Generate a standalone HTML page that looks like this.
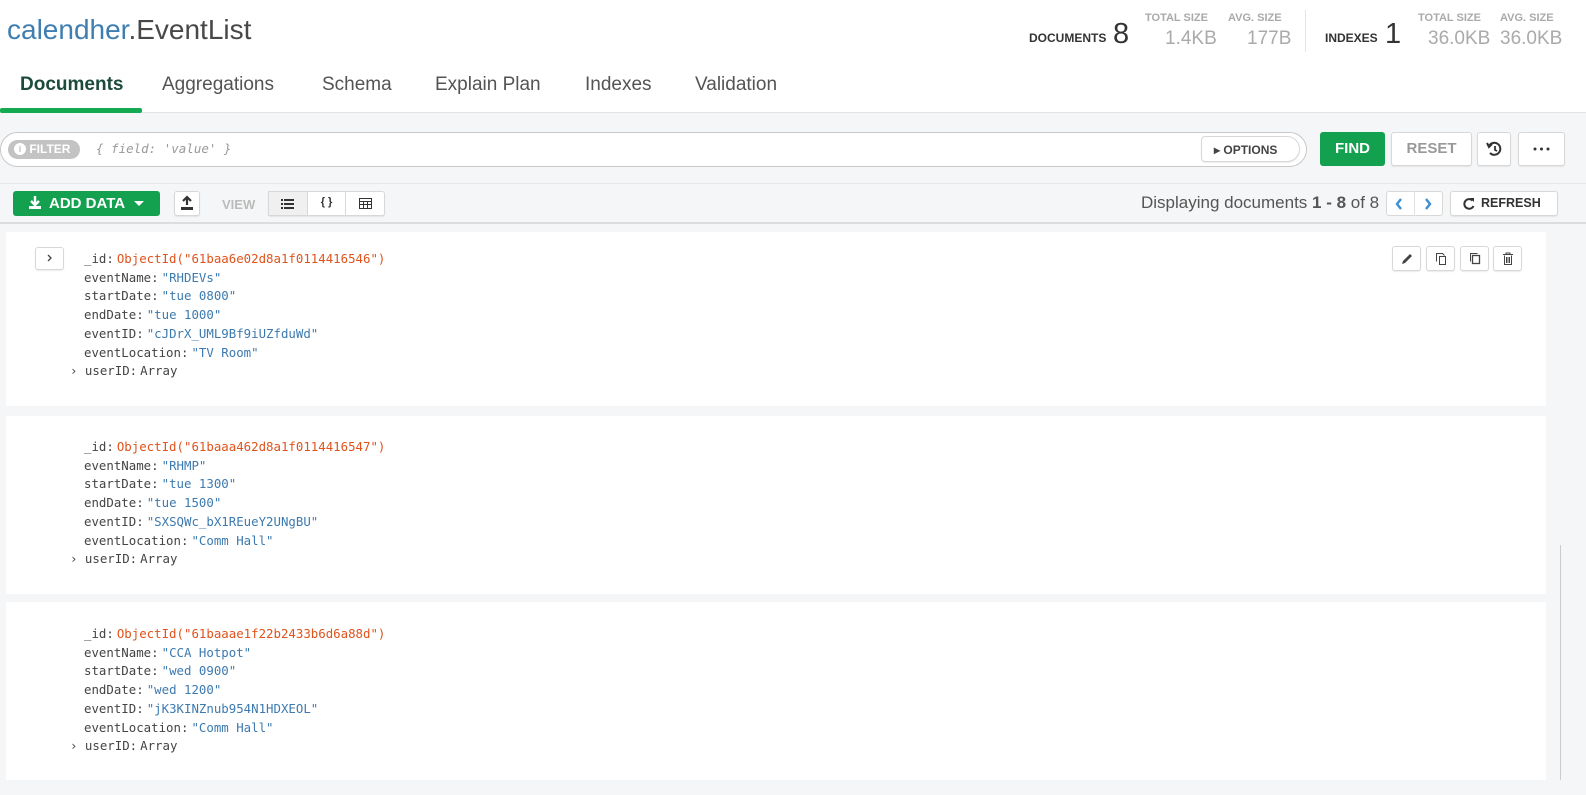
<!DOCTYPE html>
<html><head><style>
*{box-sizing:border-box;margin:0;padding:0}
body{width:1586px;height:795px;overflow:hidden;background:#f5f6f7;font-family:"Liberation Sans",sans-serif;position:relative}
.a{position:absolute}
.hdr{left:0;top:0;width:1586px;height:113px;background:#fff;border-bottom:1px solid #e4e4e4}
.title{left:7px;top:14px;font-size:28px;color:#494747}
.title span{color:#3f7eb0}
.tab{top:74px;font-size:19px;color:#545454}
.btn{background:#fff;border:1px solid #d8d8d8;border-radius:3px;box-shadow:0 1px 1px rgba(0,0,0,.08)}
.lbl{font-size:11px;color:#aaa;font-weight:bold}
.val{font-size:19px;color:#aaa}
.doc{left:6px;width:1540px;background:#fff}
.code{font-family:"DejaVu Sans Mono","Liberation Mono",monospace;font-size:12.4px;line-height:18.7px;color:#444}
.s{color:#3d7ab0;margin-left:3px}.o{color:#e0531c;margin-left:3px}
</style></head><body>
<div class="a hdr"></div>
<div class="a title"><span>calendher</span>.EventList</div>
<div class="a" style="left:1029px;top:31px;font-size:12px;font-weight:bold;color:#333">DOCUMENTS</div>
<div class="a" style="left:1113px;top:18px;font-size:29px;color:#333">8</div>
<div class="a lbl" style="left:1145px;top:12px">TOTAL SIZE</div>
<div class="a val" style="left:1165px;top:28px">1.4KB</div>
<div class="a lbl" style="left:1228px;top:12px">AVG. SIZE</div>
<div class="a val" style="left:1247px;top:28px">177B</div>
<div class="a" style="left:1305px;top:10px;width:1px;height:42px;background:#e4e4e4"></div>
<div class="a" style="left:1325px;top:31px;font-size:12px;font-weight:bold;color:#333">INDEXES</div>
<div class="a" style="left:1385px;top:18px;font-size:29px;color:#333">1</div>
<div class="a lbl" style="left:1418px;top:12px">TOTAL SIZE</div>
<div class="a val" style="left:1428px;top:28px">36.0KB</div>
<div class="a lbl" style="left:1500px;top:12px">AVG. SIZE</div>
<div class="a val" style="left:1500px;top:28px">36.0KB</div>
<div class="a tab" style="left:20px;color:#1c4b3c;font-weight:bold">Documents</div>
<div class="a" style="left:0;top:108px;width:142px;height:5px;background:#13aa52;border-radius:2px"></div>
<div class="a tab" style="left:162px">Aggregations</div>
<div class="a tab" style="left:322px">Schema</div>
<div class="a tab" style="left:435px">Explain Plan</div>
<div class="a tab" style="left:585px">Indexes</div>
<div class="a tab" style="left:695px">Validation</div>

<div class="a" style="left:0;top:132px;width:1307px;height:35px;background:#fff;border:1px solid #c8c8c8;border-radius:18px"></div>
<div class="a" style="left:8px;top:140px;width:72px;height:19px;background:#c3c3c3;border-radius:10px;color:#fff;font-size:12px;font-weight:bold;padding:2px 0 0 6px"><span style="display:inline-block;width:12px;height:12px;border-radius:6px;background:#fff;color:#c3c3c3;font-size:9px;text-align:center;line-height:12px;vertical-align:top;margin-top:1px">i</span> FILTER</div>
<div class="a code" style="left:96px;top:140px;color:#999;font-style:italic;font-size:12.5px">{ field: 'value' }</div>
<div class="a btn" style="left:1201px;top:136px;width:99px;height:26px;border-radius:4px 13px 13px 4px;font-size:12px;font-weight:bold;color:#444;padding:6px 0 0 12px">&#9656; OPTIONS</div>
<div class="a" style="left:1320px;top:132px;width:65px;height:34px;background:#13a150;border-radius:3px;color:#fff;font-weight:bold;font-size:15px;text-align:center;line-height:34px">FIND</div>
<div class="a btn" style="left:1391px;top:132px;width:81px;height:34px;color:#999;font-weight:bold;font-size:15px;text-align:center;line-height:32px">RESET</div>
<div class="a btn" style="left:1477px;top:132px;width:34px;height:34px"><svg width="32" height="32" viewBox="0 0 32 32"><path d="M11 13 A6 6 0 1 1 12 20" fill="none" stroke="#333" stroke-width="2"/><path d="M9 10 L11 14 L14 11" fill="none" stroke="#333" stroke-width="2"/><path d="M17 13 V17 L19 18" fill="none" stroke="#333" stroke-width="1.8"/></svg></div>
<div class="a btn" style="left:1518px;top:132px;width:47px;height:34px"><svg width="45" height="32"><circle cx="16" cy="16" r="1.5" fill="#333"/><circle cx="22.5" cy="16" r="1.5" fill="#333"/><circle cx="29" cy="16" r="1.5" fill="#333"/></svg></div>

<div class="a" style="left:0;top:183px;width:1586px;height:1px;background:#e8e8e8"></div>
<div class="a" style="left:13px;top:191px;width:147px;height:25px;background:#13a150;border-radius:3px;color:#fff;font-weight:bold;font-size:15px;line-height:25px;padding-left:36px">ADD DATA</div>
<svg class="a" style="left:27px;top:195px" width="16" height="16"><path d="M8 1 V9 M4 6 L8 10 L12 6" stroke="#fff" stroke-width="2.4" fill="none"/><rect x="2" y="11" width="12" height="3" fill="#fff"/></svg>
<svg class="a" style="left:133px;top:200px" width="12" height="8"><path d="M1 1 H11 L6 6Z" fill="#fff"/></svg>
<div class="a btn" style="left:174px;top:191px;width:26px;height:25px"><svg width="24" height="23"><path d="M12 5 V13 M8 9 L12 5 L16 9" stroke="#333" stroke-width="2.2" fill="none"/><rect x="6" y="15" width="12" height="3" fill="#333"/></svg></div>
<div class="a" style="left:222px;top:197px;font-size:13px;font-weight:bold;color:#bbb">VIEW</div>
<div class="a btn" style="left:268px;top:191px;width:117px;height:25px;border-radius:3px"></div>
<div class="a" style="left:268px;top:191px;width:40px;height:25px;background:#f0f0f0;border:1px solid #d8d8d8"><svg width="38" height="23"><g fill="#333"><rect x="12" y="7" width="2" height="2"/><rect x="15" y="7" width="10" height="2"/><rect x="12" y="11" width="2" height="2"/><rect x="15" y="11" width="10" height="2"/><rect x="12" y="15" width="2" height="2"/><rect x="15" y="15" width="10" height="2"/></g></svg></div>
<div class="a" style="left:308px;top:191px;width:38px;height:25px;border-right:1px solid #d8d8d8;text-align:center;line-height:23px;font-size:11px;font-weight:bold;color:#333">{ }</div>
<div class="a" style="left:346px;top:191px;width:39px;height:25px"><svg width="39" height="25"><rect x="13.5" y="7.5" width="12" height="10" fill="none" stroke="#333"/><path d="M13.5 10.5H25.5M13.5 13.5H25.5M17.5 10.5V17.5M21.5 10.5V17.5" stroke="#333"/></svg></div>
<div class="a" style="left:1141px;top:193px;font-size:17px;color:#555">Displaying documents <b>1 - 8</b> of 8</div>
<div class="a btn" style="left:1386px;top:191px;width:57px;height:25px;box-shadow:none"></div>
<div class="a" style="left:1414px;top:191px;width:1px;height:25px;background:#e2e2e2"></div>
<svg class="a" style="left:1394px;top:197px" width="10" height="14"><path d="M7 2 L3 7 L7 12" stroke="#3d8fd1" stroke-width="2.4" fill="none"/></svg>
<svg class="a" style="left:1423px;top:197px" width="10" height="14"><path d="M3 2 L7 7 L3 12" stroke="#3d8fd1" stroke-width="2.4" fill="none"/></svg>
<div class="a btn" style="left:1450px;top:191px;width:108px;height:25px;font-size:12.5px;font-weight:bold;color:#333;line-height:23px;padding-left:30px">REFRESH</div>
<svg class="a" style="left:1462px;top:197px" width="14" height="14"><path d="M10.5 3.5 A4.8 4.8 0 1 0 11.5 9" fill="none" stroke="#333" stroke-width="2"/><path d="M8 1 L12 1 L12 5Z" fill="#333"/></svg>
<div class="a" style="left:0;top:222px;width:1586px;height:2px;background:#ddd"></div>

<div class="a doc" style="top:232px;height:174px"></div>
<div class="a doc" style="top:416px;height:178px"></div>
<div class="a doc" style="top:602px;height:178px"></div>
<div class="a" style="left:1560px;top:545px;width:1px;height:235px;background:#ccc"></div>
<div class="a btn" style="left:35px;top:247px;width:29px;height:23px"><svg width="27" height="21"><path d="M12 7 L15 10 L12 13" stroke="#444" stroke-width="1.3" fill="none"/></svg></div>
<div class="a btn" style="left:1392px;top:246px;width:29px;height:25px"><svg width="27" height="23"><path d="M9 17 L10 14 L17 7 L19 9 L12 16Z" fill="#444"/></svg></div>
<div class="a btn" style="left:1426px;top:246px;width:29px;height:25px"><svg width="27" height="23"><path d="M9.5 14.5V6.5H15.5L17.5 8.5M12.5 9.5H18.5V17.5H12.5Z" fill="none" stroke="#444"/></svg></div>
<div class="a btn" style="left:1460px;top:246px;width:29px;height:25px"><svg width="27" height="23"><path d="M9.5 14.5V6.5H16.5" fill="none" stroke="#444"/><rect x="11.5" y="8.5" width="7" height="8" fill="none" stroke="#444" stroke-width="1.3"/></svg></div>
<div class="a btn" style="left:1493px;top:246px;width:29px;height:25px"><svg width="27" height="23"><path d="M9 7.5H19M12 7.5V6H16V7.5M10.5 8.5V17.5H17.5V8.5M12.5 10V16M14 10V16M15.5 10V16" fill="none" stroke="#444"/></svg></div>

<div class="a code" style="left:70px;top:250px">
<div style="padding-left:14px">_id:<span class="o">ObjectId("61baa6e02d8a1f0114416546")</span></div>
<div style="padding-left:14px">eventName:<span class="s">"RHDEVs"</span></div>
<div style="padding-left:14px">startDate:<span class="s">"tue 0800"</span></div>
<div style="padding-left:14px">endDate:<span class="s">"tue 1000"</span></div>
<div style="padding-left:14px">eventID:<span class="s">"cJDrX_UML9Bf9iUZfduWd"</span></div>
<div style="padding-left:14px">eventLocation:<span class="s">"TV Room"</span></div>
<div>› userID:<span style="margin-left:3px">Array</span></div>
</div>
<div class="a code" style="left:70px;top:438px">
<div style="padding-left:14px">_id:<span class="o">ObjectId("61baaa462d8a1f0114416547")</span></div>
<div style="padding-left:14px">eventName:<span class="s">"RHMP"</span></div>
<div style="padding-left:14px">startDate:<span class="s">"tue 1300"</span></div>
<div style="padding-left:14px">endDate:<span class="s">"tue 1500"</span></div>
<div style="padding-left:14px">eventID:<span class="s">"SXSQWc_bX1REueY2UNgBU"</span></div>
<div style="padding-left:14px">eventLocation:<span class="s">"Comm Hall"</span></div>
<div>› userID:<span style="margin-left:3px">Array</span></div>
</div>
<div class="a code" style="left:70px;top:625px">
<div style="padding-left:14px">_id:<span class="o">ObjectId("61baaae1f22b2433b6d6a88d")</span></div>
<div style="padding-left:14px">eventName:<span class="s">"CCA Hotpot"</span></div>
<div style="padding-left:14px">startDate:<span class="s">"wed 0900"</span></div>
<div style="padding-left:14px">endDate:<span class="s">"wed 1200"</span></div>
<div style="padding-left:14px">eventID:<span class="s">"jK3KINZnub954N1HDXEOL"</span></div>
<div style="padding-left:14px">eventLocation:<span class="s">"Comm Hall"</span></div>
<div>› userID:<span style="margin-left:3px">Array</span></div>
</div>
</body></html>
